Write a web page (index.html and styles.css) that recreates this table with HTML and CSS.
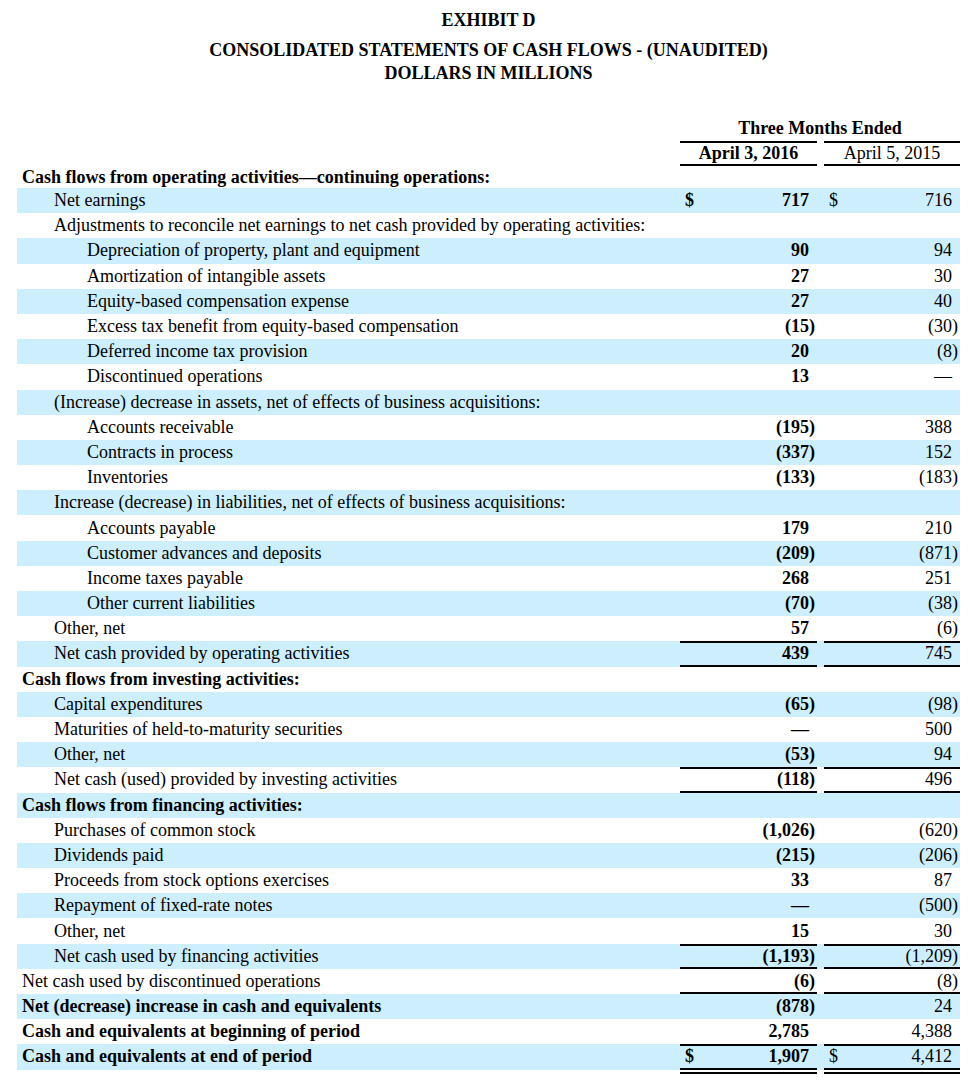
FILE: index.html
```html
<!DOCTYPE html>
<html>
<head>
<meta charset="utf-8">
<link rel="stylesheet" href="styles.css">
</head>
<body>
<div class="page">
  <header class="titles">
    <div class="t1">EXHIBIT D</div>
    <div class="t2">CONSOLIDATED STATEMENTS OF CASH FLOWS - (UNAUDITED)</div>
    <div class="t3">DOLLARS IN MILLIONS</div>
  </header>

  <div class="sheet">
    <div class="hrow">
      <div></div>
      <div class="hspan">
        <div class="htext b">Three Months Ended</div>
        <div class="hrules"><span></span><span></span></div>
      </div>
    </div>
    <div class="hrow2">
      <div></div>
      <div class="hcol"><div class="htext2 b">April 3, 2016</div><span class="bar"></span></div>
      <div class="hcol"><div class="htext2">April 5, 2015</div><span class="bar"></span></div>
    </div>

    <div class="row first"><div class="lbl b">Cash flows from operating activities—continuing operations:</div><div class="v"></div><div class="v"></div></div>
    <div class="row s"><div class="lbl i1">Net earnings</div><div class="v b"><span class="cur">$</span><span class="amt">717</span><span class="rp"></span></div><div class="v"><span class="cur">$</span><span class="amt">716</span><span class="rp"></span></div></div>
    <div class="row"><div class="lbl i1">Adjustments to reconcile net earnings to net cash provided by operating activities:</div><div class="v"></div><div class="v"></div></div>
    <div class="row s"><div class="lbl i2">Depreciation of property, plant and equipment</div><div class="v b"><span class="amt">90</span><span class="rp"></span></div><div class="v"><span class="amt">94</span><span class="rp"></span></div></div>
    <div class="row"><div class="lbl i2">Amortization of intangible assets</div><div class="v b"><span class="amt">27</span><span class="rp"></span></div><div class="v"><span class="amt">30</span><span class="rp"></span></div></div>
    <div class="row s"><div class="lbl i2">Equity-based compensation expense</div><div class="v b"><span class="amt">27</span><span class="rp"></span></div><div class="v"><span class="amt">40</span><span class="rp"></span></div></div>
    <div class="row"><div class="lbl i2">Excess tax benefit from equity-based compensation</div><div class="v b"><span class="amt">(15</span><span class="rp">)</span></div><div class="v"><span class="amt">(30</span><span class="rp">)</span></div></div>
    <div class="row s"><div class="lbl i2">Deferred income tax provision</div><div class="v b"><span class="amt">20</span><span class="rp"></span></div><div class="v"><span class="amt">(8</span><span class="rp">)</span></div></div>
    <div class="row"><div class="lbl i2">Discontinued operations</div><div class="v b"><span class="amt">13</span><span class="rp"></span></div><div class="v"><span class="amt">—</span><span class="rp"></span></div></div>
    <div class="row s"><div class="lbl i1">(Increase) decrease in assets, net of effects of business acquisitions:</div><div class="v"></div><div class="v"></div></div>
    <div class="row"><div class="lbl i2">Accounts receivable</div><div class="v b"><span class="amt">(195</span><span class="rp">)</span></div><div class="v"><span class="amt">388</span><span class="rp"></span></div></div>
    <div class="row s"><div class="lbl i2">Contracts in process</div><div class="v b"><span class="amt">(337</span><span class="rp">)</span></div><div class="v"><span class="amt">152</span><span class="rp"></span></div></div>
    <div class="row"><div class="lbl i2">Inventories</div><div class="v b"><span class="amt">(133</span><span class="rp">)</span></div><div class="v"><span class="amt">(183</span><span class="rp">)</span></div></div>
    <div class="row s"><div class="lbl i1">Increase (decrease) in liabilities, net of effects of business acquisitions:</div><div class="v"></div><div class="v"></div></div>
    <div class="row"><div class="lbl i2">Accounts payable</div><div class="v b"><span class="amt">179</span><span class="rp"></span></div><div class="v"><span class="amt">210</span><span class="rp"></span></div></div>
    <div class="row s"><div class="lbl i2">Customer advances and deposits</div><div class="v b"><span class="amt">(209</span><span class="rp">)</span></div><div class="v"><span class="amt">(871</span><span class="rp">)</span></div></div>
    <div class="row"><div class="lbl i2">Income taxes payable</div><div class="v b"><span class="amt">268</span><span class="rp"></span></div><div class="v"><span class="amt">251</span><span class="rp"></span></div></div>
    <div class="row s"><div class="lbl i2">Other current liabilities</div><div class="v b"><span class="amt">(70</span><span class="rp">)</span></div><div class="v"><span class="amt">(38</span><span class="rp">)</span></div></div>
    <div class="row"><div class="lbl i1">Other, net</div><div class="v b"><span class="amt">57</span><span class="rp"></span></div><div class="v"><span class="amt">(6</span><span class="rp">)</span></div></div>
    <div class="row s"><div class="lbl i1">Net cash provided by operating activities</div><div class="v b rt rb"><span class="amt">439</span><span class="rp"></span></div><div class="v rt rb"><span class="amt">745</span><span class="rp"></span></div></div>

    <div class="row"><div class="lbl b">Cash flows from investing activities:</div><div class="v"></div><div class="v"></div></div>
    <div class="row s"><div class="lbl i1">Capital expenditures</div><div class="v b"><span class="amt">(65</span><span class="rp">)</span></div><div class="v"><span class="amt">(98</span><span class="rp">)</span></div></div>
    <div class="row"><div class="lbl i1">Maturities of held-to-maturity securities</div><div class="v b"><span class="amt">—</span><span class="rp"></span></div><div class="v"><span class="amt">500</span><span class="rp"></span></div></div>
    <div class="row s"><div class="lbl i1">Other, net</div><div class="v b"><span class="amt">(53</span><span class="rp">)</span></div><div class="v"><span class="amt">94</span><span class="rp"></span></div></div>
    <div class="row"><div class="lbl i1">Net cash (used) provided by investing activities</div><div class="v b rt rb"><span class="amt">(118</span><span class="rp">)</span></div><div class="v rt rb"><span class="amt">496</span><span class="rp"></span></div></div>

    <div class="row s"><div class="lbl b">Cash flows from financing activities:</div><div class="v"></div><div class="v"></div></div>
    <div class="row"><div class="lbl i1">Purchases of common stock</div><div class="v b"><span class="amt">(1,026</span><span class="rp">)</span></div><div class="v"><span class="amt">(620</span><span class="rp">)</span></div></div>
    <div class="row s"><div class="lbl i1">Dividends paid</div><div class="v b"><span class="amt">(215</span><span class="rp">)</span></div><div class="v"><span class="amt">(206</span><span class="rp">)</span></div></div>
    <div class="row"><div class="lbl i1">Proceeds from stock options exercises</div><div class="v b"><span class="amt">33</span><span class="rp"></span></div><div class="v"><span class="amt">87</span><span class="rp"></span></div></div>
    <div class="row s"><div class="lbl i1">Repayment of fixed-rate notes</div><div class="v b"><span class="amt">—</span><span class="rp"></span></div><div class="v"><span class="amt">(500</span><span class="rp">)</span></div></div>
    <div class="row"><div class="lbl i1">Other, net</div><div class="v b"><span class="amt">15</span><span class="rp"></span></div><div class="v"><span class="amt">30</span><span class="rp"></span></div></div>
    <div class="row s"><div class="lbl i1">Net cash used by financing activities</div><div class="v b rt rb"><span class="amt">(1,193</span><span class="rp">)</span></div><div class="v rt rb"><span class="amt">(1,209</span><span class="rp">)</span></div></div>
    <div class="row"><div class="lbl">Net cash used by discontinued operations</div><div class="v b rb"><span class="amt">(6</span><span class="rp">)</span></div><div class="v rb"><span class="amt">(8</span><span class="rp">)</span></div></div>
    <div class="row s"><div class="lbl b">Net (decrease) increase in cash and equivalents</div><div class="v b"><span class="amt">(878</span><span class="rp">)</span></div><div class="v"><span class="amt">24</span><span class="rp"></span></div></div>
    <div class="row"><div class="lbl b">Cash and equivalents at beginning of period</div><div class="v b"><span class="amt">2,785</span><span class="rp"></span></div><div class="v"><span class="amt">4,388</span><span class="rp"></span></div></div>
    <div class="row s"><div class="lbl b">Cash and equivalents at end of period</div><div class="v b rt"><span class="cur">$</span><span class="amt">1,907</span><span class="rp"></span></div><div class="v rt"><span class="cur">$</span><span class="amt">4,412</span><span class="rp"></span></div></div>
    <div class="dbl"><div></div><span></span><span></span></div>
  </div>
</div>
</body>
</html>
```

FILE: styles.css
```css
* { box-sizing: border-box; }
html, body { margin: 0; padding: 0; background: #fff; }
body {
  font-family: "Liberation Serif", "Times New Roman", serif;
  color: #000;
  font-size: 18px;
}
.page { width: 977px; padding-top: 9px; }
.b { font-weight: bold; }

.titles { text-align: center; font-weight: bold; }
.t1 { line-height: 23px; }
.t2 { line-height: 23px; margin-top: 7px; }
.t3 { line-height: 23px; }

.sheet { margin-left: 17px; width: 943px; margin-top: 31px; }

.hrow, .hrow2, .row, .dbl {
  display: grid;
  grid-template-columns: 656px 137px 136px;
  column-gap: 7px;
}
.hspan { grid-column: 2 / 4; display: flex; flex-direction: column; }
.htext { height: 25px; line-height: 25px; text-align: center; }
.hrules { display: grid; grid-template-columns: 137px 136px; column-gap: 7px; height: 2px; }
.hrules span { background: #000; }
.hcol { display: flex; flex-direction: column; }
.htext2 { height: 21px; line-height: 21px; text-align: center; }
.bar { height: 2px; background: #000; }

.row { height: 25.2px; align-items: center; }
.row.first { height: 22px; }
.row.s { background: #cdeefc; }
.lbl { padding-left: 5px; white-space: nowrap; }
.lbl.i1 { padding-left: 37px; }
.lbl.i2 { padding-left: 70px; }

.v {
  height: 100%;
  display: flex;
  align-items: center;
  padding: 0 2px 0 5px;
  white-space: nowrap;
}
.v .cur { flex: none; }
.v .amt { flex: 1; text-align: right; }
.v .rp { flex: none; width: 6px; }
.v.rt { box-shadow: inset 0 2px 0 #000; }
.v.rb { box-shadow: inset 0 -2px 0 #000; }
.v.rt.rb { box-shadow: inset 0 2px 0 #000, inset 0 -2px 0 #000; }

.dbl { margin-top: -2px; height: 6px; }
.dbl span { border-top: 2px solid #000; border-bottom: 2px solid #000; }
```
